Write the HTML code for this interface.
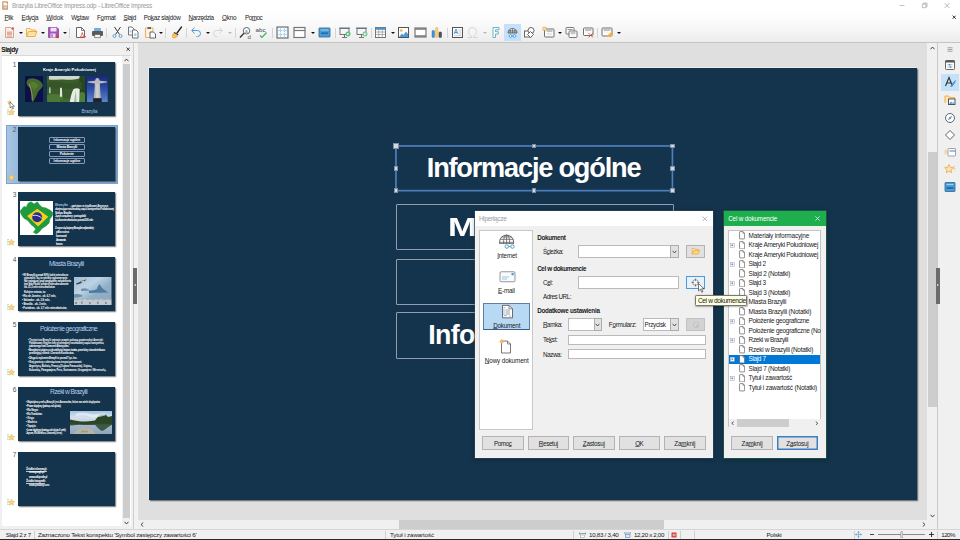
<!DOCTYPE html>
<html><head><meta charset="utf-8">
<style>
*{box-sizing:border-box;margin:0;padding:0}
html,body{width:960px;height:540px;overflow:hidden;background:#fff}
body{position:relative;font-family:"Liberation Sans",sans-serif;font-size:6.3px;color:#1a1a1a}
.a{position:absolute}
.t{position:absolute;white-space:nowrap;line-height:8px;height:8px}
u{text-decoration:underline;text-decoration-thickness:0.5px;text-underline-offset:0px;text-decoration-color:rgba(30,30,30,.6)}
#titlebar{left:0;top:0;width:960px;height:11px;background:#fff}
#menubar{left:0;top:11px;width:960px;height:32px;background:linear-gradient(#fff 0,#fbfbfb 35%,#f3f3f3 75%,#ececec 100%);border-bottom:1px solid #c4c4c4}
#toolbar{display:none}
.sep{position:absolute;top:28px;width:1px;height:10px;background:#d4d4d4}
.dd{position:absolute;top:32.2px;width:0;height:0;border-left:2px solid transparent;border-right:2px solid transparent;border-top:2.4px solid #111}
.ic{position:absolute;top:25.8px;width:13px;height:13px;overflow:visible}
#work{left:137.5px;top:43px;width:790px;height:476.5px;background:#dfdfdf}
#slide{left:149px;top:68px;width:768.2px;height:431.8px;background:#14334c;box-shadow:-1px -1px 0 #ebebeb,1px 1px 1.2px rgba(50,50,50,.75)}
.box{position:absolute;border:1px solid rgba(200,210,222,.68);border-radius:1px}
.bt{position:absolute;color:#fff;font-weight:bold;font-size:26.6px;line-height:30px;white-space:nowrap;letter-spacing:-0.35px}
.h{position:absolute;background:#d4d8dd;border:0.6px solid #8191a5}
.dlg{position:absolute;background:#f0f0f0}
.btn{position:absolute;background:#e1e1e1;border:0.6px solid #b3b3b3;height:14px;text-align:center;line-height:13px;font-size:6.3px}
.inp{position:absolute;background:#fff;border:0.6px solid #bbb}
.thumb{position:absolute;left:18.1px;width:97.3px;height:54.5px;background:#14334c;box-shadow:0.8px 0.8px 1.2px rgba(0,0,0,.55);overflow:hidden}
.num{position:absolute;left:8px;width:8.5px;text-align:right;font-size:6.6px;color:#555;line-height:8px}
.star{position:absolute;left:7px;width:8px;height:8px}
.row{position:absolute;left:728.6px;width:92px;height:9.5px}
.row .t{left:20px;top:0.9px;font-size:6.45px}
.pg{position:absolute;left:10.2px;top:0.3px;width:6.2px;height:8.5px}
.ex{position:absolute;left:2.2px;top:3px;width:4px;height:4px;border:0.5px solid #8a93a8;background:#fff}
.ex:before{content:"";position:absolute;left:0.5px;top:1.2px;width:2px;height:0.6px;background:#33477a}
.ex:after{content:"";position:absolute;left:1.2px;top:0.5px;width:0.6px;height:2px;background:#33477a}
</style></head><body>

<!-- TITLE BAR -->
<div class="a" id="titlebar"></div>
<div class="a" id="menubar"></div>
<div class="a" id="toolbar"></div>

<!-- title -->
<svg class="a" style="left:1.600px;top:1px;width:6.800px;height:9px" viewBox="0 0 14 18"><path d="M1 1h8l4 4v12H1z" fill="#c9a57e" stroke="#b88d63" stroke-width="1"/><path d="M3 3h5.500l2.500 2.500V9H3z" fill="#fbf6f0"/><rect x="4" y="11" width="6" height="4" fill="#e8d5bd"/><circle cx="11.500" cy="2.800" r="1.800" fill="#e8843a"/></svg>
<div class="t" style="letter-spacing:-0.224px;left:12px;top:1.6px;font-size:6.35px;color:#9a9a9a">Brazylia LibreOffice Impress.odp - LibreOffice Impress</div>
<svg class="a" style="left:898px;top:1px;width:58px;height:9px" viewBox="0 0 58 9"><path d="M1.5 4.5h5" stroke="#9a9a9a" stroke-width=".6" fill="none"/><path d="M24.3 3.1h3.6v3.6h-3.6zM25.4 3.1v-1h3.6v3.6h-1" stroke="#8a8a8a" stroke-width=".55" fill="none"/><path d="M46.7 2.2l4.8 4.8M51.5 2.2l-4.8 4.8" stroke="#8a8a8a" stroke-width=".6" fill="none"/></svg>
<svg class="a" style="left:951.800px;top:14.800px;width:4.400px;height:4.400px" viewBox="0 0 5 5"><path d="M.7.7l3.600 3.600M4.300.7L.7 4.300" stroke="#222" stroke-width="1.050" fill="none"/></svg>
<!-- menu -->
<div class="t" style="letter-spacing:-0.389px;left:4.4px;top:14.200px"><u>P</u>lik</div>
<div class="t" style="letter-spacing:-0.384px;left:21.6px;top:14.200px"><u>E</u>dycja</div>
<div class="t" style="letter-spacing:-0.103px;left:46.2px;top:14.200px"><u>W</u>idok</div>
<div class="t" style="letter-spacing:-0.284px;left:71.2px;top:14.200px">W<u>s</u>taw</div>
<div class="t" style="letter-spacing:-0.247px;left:97px;top:14.200px">F<u>o</u>rmat</div>
<div class="t" style="letter-spacing:-0.363px;left:123.6px;top:14.200px"><u>S</u>lajd</div>
<div class="t" style="letter-spacing:-0.267px;left:143.7px;top:14.200px">Po<u>k</u>az slajdów</div>
<div class="t" style="letter-spacing:-0.375px;left:188.6px;top:14.200px"><u>N</u>arzędzia</div>
<div class="t" style="letter-spacing:-0.191px;left:222px;top:14.200px"><u>O</u>kno</div>
<div class="t" style="letter-spacing:-0.522px;left:245px;top:14.200px">Po<u>m</u>oc</div>

<!-- toolbar separators -->
<div class="sep" style="left:69.3px"></div><div class="sep" style="left:106.3px"></div><div class="sep" style="left:165.4px"></div><div class="sep" style="left:186.2px"></div><div class="sep" style="left:234.6px"></div><div class="sep" style="left:271.6px"></div><div class="sep" style="left:334.6px"></div><div class="sep" style="left:371.4px"></div><div class="sep" style="left:446.6px"></div><div class="sep" style="left:597.4px"></div>
<!-- dropdown arrows -->
<div class="dd" style="left:18.9px"></div><div class="dd" style="left:41.1px"></div><div class="dd" style="left:63.1px"></div><div class="dd" style="left:159.2px"></div><div class="dd" style="left:205.6px"></div><div class="dd" style="left:227.6px;border-top-color:#b5b5b5"></div><div class="dd" style="left:311.1px"></div><div class="dd" style="left:390.6px"></div><div class="dd" style="left:482.6px;border-top-color:#b5b5b5"></div><div class="dd" style="left:558.2px"></div><div class="dd" style="left:617.2px"></div>
<!-- hyperlink button highlight -->
<div class="a" style="left:504px;top:24px;width:16.7px;height:17px;background:#c5e1f9"></div>

<!-- ICONS (viewBox 26x26 => 13px) -->
<svg class="ic" style="left:3px" viewBox="0 0 26 26"><path d="M5 3h11l5 5v15H5z" fill="#faeee9" stroke="#d9a48f" stroke-width="2"/><rect x="8" y="11" width="10" height="8" fill="#dfb09e"/><path d="M8 21h10" stroke="#dfb09e" stroke-width="1.6"/><circle cx="19.5" cy="5" r="2.6" fill="#e0564a"/></svg>
<svg class="ic" style="left:25px" viewBox="0 0 26 26"><path d="M3 21V5h7l2 3h9v4" fill="#fdf0cc" stroke="#eda63c" stroke-width="1.8"/><path d="M3 21l4-10h17l-4 10z" fill="#fce3a0" stroke="#eda63c" stroke-width="1.8" stroke-linejoin="round"/></svg>
<svg class="ic" style="left:47px" viewBox="0 0 26 26"><path d="M3 3h17l3 3v17H3z" fill="#a156b7" stroke="#8e44a6" stroke-width="1.6"/><rect x="7" y="3.5" width="12" height="7.5" fill="#f1e3f5"/><rect x="7" y="15" width="10" height="8" fill="#f1e3f5"/><rect x="9" y="16.5" width="2.4" height="5" fill="#8e44a6"/><circle cx="21" cy="21.5" r="3.1" fill="#e53b3b"/></svg>
<svg class="ic" style="left:74px" viewBox="0 0 26 26"><path d="M5 3h10l6 6v14H5z" fill="#fff" stroke="#666" stroke-width="2"/><path d="M15 3v6h6" fill="none" stroke="#666" stroke-width="1.6"/><path d="M11 23c3-2 5-6 5.5-10 .8 5 3.500 8 7 8.500-4-.5-8 0-12.500 1.500z" fill="none" stroke="#e04a3f" stroke-width="1.6"/></svg>
<svg class="ic" style="left:90.5px" viewBox="0 0 26 26"><rect x="7.500" y="5" width="11" height="6" fill="#6fb1de" stroke="#4b8fc2" stroke-width="1.200"/><rect x="2" y="10" width="22" height="10" rx="2" fill="#5a5a5a"/><rect x="7.500" y="17" width="11" height="6.500" fill="#f4f4f4" stroke="#5a5a5a" stroke-width="1.300"/></svg>
<svg class="ic" style="left:110.6px" viewBox="0 0 26 26"><path d="M7 2l10 15M19 2L9 17" stroke="#3a3a3a" stroke-width="2" fill="none"/><circle cx="7" cy="20" r="3" fill="#eaf4fb" stroke="#4f9bd0" stroke-width="1.8"/><circle cx="19" cy="20" r="3" fill="#eaf4fb" stroke="#4f9bd0" stroke-width="1.8"/></svg>
<svg class="ic" style="left:127.4px" viewBox="0 0 26 26"><path d="M3 2h7l4 4v12H3z" fill="#fff" stroke="#666" stroke-width="1.8"/><path d="M11 8h7l4 4v12H11z" fill="#fff" stroke="#666" stroke-width="1.8"/><rect x="14" y="15" width="5" height="5" fill="#9fd0ea"/><rect x="5" y="9" width="4" height="4" fill="#9fd0ea"/></svg>
<svg class="ic" style="left:144px" viewBox="0 0 26 26"><rect x="3" y="4" width="15" height="19" rx="1" fill="#fbf3e2" stroke="#e5b673" stroke-width="2.2"/><rect x="7" y="2" width="7" height="4" fill="#666"/><path d="M12 12h7l4 4v8H12z" fill="#fff" stroke="#555" stroke-width="1.8"/></svg>
<svg class="ic" style="left:169.5px" viewBox="0 0 26 26"><path d="M23 2L14 14" stroke="#222" stroke-width="2.6" stroke-linecap="round"/><path d="M9 12l8 5-1 2-9-5z" fill="#333"/><path d="M7 14l8 5c0 3-3 5-9 5-2-2-2-6 1-10z" fill="#f6c25b" stroke="#eba53a" stroke-width="1.4"/></svg>
<svg class="ic" style="left:189.5px" viewBox="0 0 26 26"><path d="M4 9h11a6 6 0 0 1 0 12h-2" fill="none" stroke="#4f9bd0" stroke-width="2"/><path d="M9 3L3.500 9 9 15" fill="none" stroke="#4f9bd0" stroke-width="2"/></svg>
<svg class="ic" style="left:211px" viewBox="0 0 26 26"><path d="M22 9H11a6 6 0 0 0 0 12h2" fill="none" stroke="#d0d0d0" stroke-width="1.8"/><path d="M17 3l5.500 6L17 15" fill="none" stroke="#d0d0d0" stroke-width="1.8"/></svg>
<svg class="ic" style="left:239px" viewBox="0 0 26 26"><circle cx="15" cy="9.500" r="6.500" fill="#fff" stroke="#555" stroke-width="1.8"/><path d="M10 14.500L2 23" stroke="#333" stroke-width="2.6"/><text x="12" y="13" font-size="9" font-family="Liberation Sans" fill="#4f9bd0" font-weight="bold">a</text><text x="17" y="25" font-size="12" font-family="Liberation Sans" fill="#555">d</text></svg>
<svg class="ic" style="left:254.500px" viewBox="0 0 26 26"><text x="1" y="12" font-size="12.500" font-family="Liberation Sans" fill="#444">abc</text><path d="M10 19l4 4 9-10" fill="none" stroke="#3fae6a" stroke-width="2.4"/></svg>
<svg class="ic" style="left:275.500px" viewBox="0 0 26 26"><rect x="2" y="2" width="22" height="22" fill="#f3f9fd" stroke="#555" stroke-width="2"/><path d="M9 3v20M17 3v20M3 9h20M3 17h20" stroke="#7fb7df" stroke-width="1.6" stroke-dasharray="2 1.500"/></svg>
<svg class="ic" style="left:293px" viewBox="0 0 26 26"><rect x="2" y="3" width="22" height="20" fill="#fff" stroke="#777" stroke-width="2.4"/><path d="M2 9h22" stroke="#777" stroke-width="2.400"/></svg>
<svg class="ic" style="left:318px" viewBox="0 0 26 26"><rect x="2" y="4" width="22" height="18" rx="1" fill="#4a9bd6" stroke="#3b6f98" stroke-width="1.800"/><path d="M5 8h16" stroke="#9fd0ee" stroke-width="2"/><path d="M6 14.500h14" stroke="#1f6fb3" stroke-width="3.500"/></svg>
<svg class="ic" style="left:338px" viewBox="0 0 26 26"><path d="M2 4h22" stroke="#4b7fa8" stroke-width="2"/><rect x="4" y="5" width="18" height="12" fill="#f6f6f6" stroke="#666" stroke-width="1.800"/><path d="M13 17v5M8 23h10" stroke="#666" stroke-width="1.800"/><circle cx="20" cy="16" r="4.500" fill="#6cc68a" stroke="#3fa862" stroke-width="1"/><path d="M18.500 13.500l4 2.500-4 2.500z" fill="#fff"/></svg>
<svg class="ic" style="left:354.500px" viewBox="0 0 26 26"><path d="M2 4h22" stroke="#4b7fa8" stroke-width="2"/><rect x="4" y="5" width="18" height="12" fill="#f6f6f6" stroke="#666" stroke-width="1.800"/><path d="M13 17v5M8 23h10" stroke="#666" stroke-width="1.800"/><circle cx="20" cy="16" r="4.500" fill="#8fd3a6" stroke="#5fb87d" stroke-width="1"/><path d="M18.500 13.500l4 2.500-4 2.500z" fill="#fff"/></svg>
<svg class="ic" style="left:374.300px" viewBox="0 0 26 26"><rect x="3" y="3" width="20" height="20" fill="#fff" stroke="#666" stroke-width="1.800"/><rect x="3" y="3" width="20" height="4.500" fill="#4a8fc7"/><path d="M3 12h20M3 17h20M9.500 7v16M16.500 7v16" stroke="#888" stroke-width="1.300"/></svg>
<svg class="ic" style="left:397.300px" viewBox="0 0 26 26"><rect x="3" y="3" width="20" height="20" fill="#fff" stroke="#555" stroke-width="2"/><circle cx="8.500" cy="9" r="2.600" fill="#f3b24a"/><path d="M4 22l6-7 3 3 5-7 4 5v6z" fill="#4f9bd8"/></svg>
<svg class="ic" style="left:414px" viewBox="0 0 26 26"><rect x="2" y="4" width="22" height="18" fill="#fff" stroke="#777" stroke-width="2.400"/><path d="M2 6h22M2 20h22" stroke="#777" stroke-width="3"/></svg>
<svg class="ic" style="left:430.200px" viewBox="0 0 26 26"><rect x="4" y="9" width="5" height="14" rx="1.500" fill="#3f92dc" stroke="#2f7cc2" stroke-width="1"/><rect x="11" y="3" width="5" height="20" rx="1.500" fill="#f6cd7b" stroke="#e9b04f" stroke-width="1"/><rect x="18" y="12" width="5" height="11" rx="1.500" fill="#555" stroke="#333" stroke-width="1"/></svg>
<svg class="ic" style="left:450.500px" viewBox="0 0 26 26"><rect x="3" y="3" width="20" height="20" fill="#fff" stroke="#555" stroke-width="2"/><text x="5" y="16.500" font-size="13" font-weight="bold" font-family="Liberation Sans" fill="#3f92dc">A</text><path d="M15 8h6M15 12h6M15 16h6M6 19.500h15" stroke="#aaa" stroke-width="1.300"/></svg>
<svg class="ic" style="left:466px" viewBox="0 0 26 26"><path d="M3 23h8v-2.500C7 18.500 5 15 5 11.500 5 6.500 8.500 3 13 3s8 3.500 8 8.500c0 3.500-2 7-6 9V23h8" fill="none" stroke="#cfcfcf" stroke-width="1.700"/></svg>
<svg class="ic" style="left:489.300px" viewBox="0 0 26 26"><path d="M8 3h12v4.600h-7v3.800h5.500v4.600H13V23H8z" fill="#fff" stroke="#5aa9c4" stroke-width="1.800" stroke-linejoin="round"/></svg>
<svg class="ic" style="left:506px" viewBox="0 0 26 26"><path d="M4 14a9 9 0 0 1 18 0z" fill="#f2f8fc" stroke="#4a4a4a" stroke-width="1.500"/><path d="M13 5v9M8.500 6.500v7.500M17.500 6.500v7.500M5 9.500h16M4 12h18" stroke="#4a4a4a" stroke-width="1.200"/><circle cx="9" cy="20" r="2.800" fill="#e8f4fb" stroke="#3f92dc" stroke-width="1.600"/><circle cx="17" cy="20" r="2.800" fill="#e8f4fb" stroke="#3f92dc" stroke-width="1.600"/><path d="M11.500 20h3" stroke="#3f92dc" stroke-width="1.500"/></svg>
<svg class="ic" style="left:522.500px" viewBox="0 0 26 26"><rect x="3" y="10" width="13" height="12" fill="#fff" stroke="#555" stroke-width="1.800"/><circle cx="16" cy="9" r="6" fill="#fff" stroke="#555" stroke-width="1.800"/><path d="M15 11l6 6-6 6-6-6z" fill="#fff" stroke="#555" stroke-width="1.800"/></svg>
<svg class="ic" style="left:541.500px" viewBox="0 0 26 26"><rect x="5" y="6" width="19" height="16" rx="1.500" fill="#fff" stroke="#666" stroke-width="1.900"/><path d="M9 10h12" stroke="#666" stroke-width="1.600"/><path d="M9 14.500h11M9 17.500h11" stroke="#ccc" stroke-width="1.200"/><rect x="2" y="2.500" width="6" height="6" fill="#fbe4b0" stroke="#eda63c" stroke-width="1.400"/></svg>
<svg class="ic" style="left:565.300px" viewBox="0 0 26 26"><rect x="2" y="3" width="16" height="13" rx="1.500" fill="#fff" stroke="#666" stroke-width="1.800"/><path d="M5 7h10" stroke="#666" stroke-width="1.400"/><rect x="8" y="10" width="16" height="13" rx="1.500" fill="#fff" stroke="#666" stroke-width="1.800"/><path d="M11 14h10" stroke="#666" stroke-width="1.500"/><path d="M12 18h8" stroke="#ccc" stroke-width="1.200"/></svg>
<svg class="ic" style="left:581.500px" viewBox="0 0 26 26"><rect x="3" y="4" width="19" height="15" rx="1.500" fill="#fff" stroke="#666" stroke-width="1.900"/><path d="M6 8h13" stroke="#666" stroke-width="1.600"/><path d="M7 12h8" stroke="#ddd" stroke-width="1.200"/><path d="M13 14l9 9M22 14l-9 9" stroke="#e04a4a" stroke-width="1.800"/></svg>
<svg class="ic" style="left:601.300px" viewBox="0 0 26 26"><rect x="2" y="4" width="20" height="16" rx="1.500" fill="#fff" stroke="#666" stroke-width="1.900"/><path d="M5 8h14" stroke="#666" stroke-width="1.600"/><path d="M6 12h9" stroke="#ddd" stroke-width="1.200"/><path d="M22 10v12H10z" fill="#f3b04a"/></svg>


<!-- WORKSPACE -->
<div class="a" id="work"></div>
<div class="a" id="slide"></div>
<!-- LEFT PANEL -->
<div class="a" style="left:0;top:43px;width:133.5px;height:486px;background:#f0f0f0"></div>
<div class="a" style="left:133px;top:43px;width:1px;height:486px;background:#cfcfcf"></div>
<div class="a" style="left:134px;top:43px;width:3.5px;height:486px;background:#f2f2f2"></div>
<div class="a" style="left:133.3px;top:267.5px;width:3.4px;height:36px;background:#6b6b6b"></div>
<div class="a" style="left:134.2px;top:284px;width:0;height:0;border-top:1.5px solid transparent;border-bottom:1.5px solid transparent;border-right:2px solid #eee"></div>
<div class="t" style="letter-spacing:-0.426px;left:1.3px;top:45.6px;font-weight:bold;font-size:6.5px;color:#111">Slajdy</div>
<svg class="a" style="left:125.800px;top:46.800px;width:4.400px;height:4.400px" viewBox="0 0 5 5"><path d="M.6.6l3.800 3.800M4.400.6L.6 4.400" stroke="#333" stroke-width="1.050" fill="none"/></svg>
<div class="a" style="left:1.5px;top:55.4px;width:129px;height:471px;background:#fff;border-top:0.6px solid #d9d9d9"></div>
<!-- panel scrollbar -->
<div class="a" style="left:122.3px;top:56px;width:7.7px;height:470.500px;background:#f0f0f0"></div>
<div class="a" style="left:122.800px;top:64px;width:7px;height:453.500px;background:#cdcdcd"></div>
<svg class="a" style="left:124px;top:57.500px;width:5px;height:4px" viewBox="0 0 10 8"><path d="M1 6.500l4-4.500 4 4.500" fill="none" stroke="#333" stroke-width="1.800"/></svg>
<svg class="a" style="left:124px;top:520.500px;width:5px;height:4px" viewBox="0 0 10 8"><path d="M1 1.500l4 4.500 4-4.500" fill="none" stroke="#333" stroke-width="1.800"/></svg>
<!-- selection highlight slide 2 -->
<div class="a" style="left:5.500px;top:124.700px;width:112.200px;height:59.500px;background:linear-gradient(90deg,#a9c6e3 0,#8fb4d9 14%,#8aafd5 100%);border:0.6px solid #7da3cb"></div>

<!-- stars -->
<svg class="star" style="top:107.8px" viewBox="0 0 16 16"><path d="M1.500 2.500v11M1.500 3h2M1.500 8h1.500M1.500 13h2" stroke="#7cc9a6" stroke-width="1.300" stroke-dasharray="2 1"/><path d="M9 2.500l1.900 4 4.300.5-3.200 3 .9 4.300L9 12.200l-3.900 2.100.9-4.300-3.200-3 4.300-.5z" fill="#f9d488" stroke="#eaa844" stroke-width="1"/></svg><svg class="star" style="top:173.3px" viewBox="0 0 16 16"><path d="M1.500 2.500v11M1.500 3h2M1.500 8h1.500M1.500 13h2" stroke="#7cc9a6" stroke-width="1.300" stroke-dasharray="2 1"/><path d="M9 2.500l1.900 4 4.300.5-3.200 3 .9 4.300L9 12.200l-3.900 2.100.9-4.300-3.200-3 4.300-.5z" fill="#f9d488" stroke="#eaa844" stroke-width="1"/></svg><svg class="star" style="top:238.3px" viewBox="0 0 16 16"><path d="M1.500 2.500v11M1.500 3h2M1.500 8h1.500M1.500 13h2" stroke="#7cc9a6" stroke-width="1.300" stroke-dasharray="2 1"/><path d="M9 2.500l1.900 4 4.300.5-3.200 3 .9 4.300L9 12.200l-3.900 2.100.9-4.300-3.200-3 4.300-.5z" fill="#f9d488" stroke="#eaa844" stroke-width="1"/></svg><svg class="star" style="top:303.3px" viewBox="0 0 16 16"><path d="M1.500 2.500v11M1.500 3h2M1.500 8h1.500M1.500 13h2" stroke="#7cc9a6" stroke-width="1.300" stroke-dasharray="2 1"/><path d="M9 2.500l1.900 4 4.300.5-3.200 3 .9 4.300L9 12.200l-3.900 2.100.9-4.300-3.200-3 4.300-.5z" fill="#f9d488" stroke="#eaa844" stroke-width="1"/></svg><svg class="star" style="top:368.3px" viewBox="0 0 16 16"><path d="M1.500 2.500v11M1.500 3h2M1.500 8h1.500M1.500 13h2" stroke="#7cc9a6" stroke-width="1.300" stroke-dasharray="2 1"/><path d="M9 2.500l1.900 4 4.300.5-3.200 3 .9 4.300L9 12.200l-3.900 2.100.9-4.300-3.200-3 4.300-.5z" fill="#f9d488" stroke="#eaa844" stroke-width="1"/></svg><svg class="star" style="top:433.3px" viewBox="0 0 16 16"><path d="M1.500 2.500v11M1.500 3h2M1.500 8h1.500M1.500 13h2" stroke="#7cc9a6" stroke-width="1.300" stroke-dasharray="2 1"/><path d="M9 2.500l1.900 4 4.300.5-3.200 3 .9 4.300L9 12.200l-3.900 2.100.9-4.300-3.200-3 4.300-.5z" fill="#f9d488" stroke="#eaa844" stroke-width="1"/></svg><svg class="star" style="top:498.3px" viewBox="0 0 16 16"><path d="M1.500 2.500v11M1.500 3h2M1.500 8h1.500M1.500 13h2" stroke="#7cc9a6" stroke-width="1.300" stroke-dasharray="2 1"/><path d="M9 2.500l1.900 4 4.300.5-3.200 3 .9 4.300L9 12.200l-3.900 2.100.9-4.300-3.200-3 4.300-.5z" fill="#f9d488" stroke="#eaa844" stroke-width="1"/></svg><svg class="a" style="left:6.500px;top:100px;width:9px;height:10px" viewBox="0 0 18 20"><path d="M5 1l1.200 2.600 2.800.3-2.100 1.900.6 2.800L5 7.200 2.500 8.600l.6-2.800L1 3.900l2.800-.3z" fill="#fbd27a" stroke="#eba53a" stroke-width=".8"/><path d="M6 4v12l3-2.800 2 4.800 2-.8-2-4.700h4z" fill="#fff" stroke="#222" stroke-width="1"/></svg>
<!-- thumbs -->
<div class="num" style="top:60.800px">1</div>
<div class="num" style="top:125.800px">2</div>
<div class="num" style="top:190.800px">3</div>
<div class="num" style="top:255.800px">4</div>
<div class="num" style="top:320.800px">5</div>
<div class="num" style="top:385.800px">6</div>
<div class="num" style="top:450.800px">7</div>

<!-- thumb 1 -->
<div class="thumb" style="top:61.700px">
 <div class="t" style="letter-spacing:-0.034px;left:24.800px;top:4.300px;font-size:4.200px;font-weight:bold;color:#fff">Kraje Ameryki Południowej</div>
 <svg class="a" style="left:6.900px;top:14.300px;width:18.400px;height:26px" viewBox="0 0 184 260" preserveAspectRatio="none"><defs><filter id="b1" x="-10%" y="-10%" width="120%" height="120%"><feGaussianBlur stdDeviation="4"/></filter><clipPath id="c1"><rect width="184" height="260"/></clipPath></defs><rect width="184" height="260" fill="#0b1046"/><g clip-path="url(#c1)" filter="url(#b1)"><path d="M20 48C38 20 82 18 104 30c36 6 68 32 74 62-6 34-38 46-52 76-10 30-26 54-40 82-6 12-16 8-16-6 4-44-4-94-20-124C30 100 4 84 20 48z" fill="#47692b"/><path d="M60 60c24-6 60 10 76 36-10 20-36 30-46 54-6-30-24-44-34-62-4-10-4-22 4-28z" fill="#58803a" opacity=".8"/><path d="M42 78c10 30 22 60 26 96 2 26 4 48 4 70" stroke="#b89c6c" stroke-width="9" fill="none"/></g></svg>
 <svg class="a" style="left:28.500px;top:14.300px;width:38.200px;height:26.500px" viewBox="0 0 385 265" preserveAspectRatio="none"><defs><filter id="b2" x="-10%" y="-10%" width="120%" height="120%"><feGaussianBlur stdDeviation="7"/></filter><clipPath id="c2"><rect width="385" height="265"/></clipPath></defs><rect width="385" height="265" fill="#3c5c2e"/><g clip-path="url(#c2)" filter="url(#b2)"><path d="M20 0h310v22c-50 16-110 20-160 14S60 44 20 36z" fill="#e9efe9" opacity=".85"/><path d="M330 0h55v265h-40c-10-60-30-120-15-265z" fill="#2b4423"/><path d="M0 70c60-20 120-10 180 0s120 0 170-10v70H0z" fill="#365428"/><ellipse cx="70" cy="225" rx="95" ry="45" fill="#4c7836"/><ellipse cx="190" cy="248" rx="60" ry="24" fill="#436c2f"/><ellipse cx="355" cy="215" rx="40" ry="55" fill="#4f7f35"/><path d="M132 118h18l4 90h-24z" fill="#dfe9df"/><path d="M22 112h14l2 60h-18z" fill="#cfdccf" opacity=".8"/><path d="M266 132c20-12 46-14 64 0l-6 133h-96c10-50 20-98 38-133z" fill="#e6ede6"/><path d="M290 140l10 125h-30z" fill="#7f9f7a" opacity=".6"/></g></svg>
 <svg class="a" style="left:69.400px;top:14.300px;width:20.700px;height:26.300px" viewBox="0 0 208 263" preserveAspectRatio="none"><defs><linearGradient id="g3" x1="0" y1="0" x2="0" y2="1"><stop offset="0" stop-color="#1a2878"/><stop offset=".5" stop-color="#2f4fa8"/><stop offset="1" stop-color="#5f86cc"/></linearGradient><filter id="b3" x="-10%" y="-10%" width="120%" height="120%"><feGaussianBlur stdDeviation="3"/></filter><clipPath id="c3"><rect width="208" height="263"/></clipPath></defs><rect width="208" height="263" fill="url(#g3)"/><g clip-path="url(#c3)" filter="url(#b3)"><path d="M8 54l72-6 8-20c6-10 26-10 32 0l8 20 72 6v12l-70 8v22l8 130H70l8-130V74L8 66z" fill="#b9bcbd"/><path d="M96 80h16l4 140H92z" fill="#cfd1d0"/><rect x="62" y="222" width="86" height="41" fill="#202226"/></g></svg>
 <div class="t" style="letter-spacing:-0.133px;left:63.300px;top:46.100px;font-size:4.800px;color:#a9c0dc">Brazylia</div>
</div>
<!-- thumb 2 -->
<div class="thumb" style="top:126.900px">
 <div class="a" style="left:31.200px;top:9.800px;width:36px;height:6.200px;border:0.5px solid #8399bb;border-radius:1px"></div>
 <div class="a" style="left:31.200px;top:17.100px;width:36px;height:6.200px;border:0.5px solid #8399bb;border-radius:1px"></div>
 <div class="a" style="left:31.200px;top:24px;width:36px;height:6.200px;border:0.5px solid #8399bb;border-radius:1px"></div>
 <div class="a" style="left:31.200px;top:30.800px;width:36px;height:6.200px;border:0.5px solid #8399bb;border-radius:1px"></div>
 <div class="t" style="letter-spacing:-0.153px;left:35.500px;top:8.700px;font-size:3.400px;font-weight:bold;color:#fff">Informacje ogólne</div>
 <div class="t" style="letter-spacing:-0.204px;left:38.500px;top:16px;font-size:3.400px;font-weight:bold;color:#fff">Miasta Brazylii</div>
 <div class="t" style="letter-spacing:-0.203px;left:41.700px;top:22.900px;font-size:3.400px;font-weight:bold;color:#fff">Położenie</div>
 <div class="t" style="letter-spacing:-0.153px;left:35.500px;top:29.700px;font-size:3.400px;font-weight:bold;color:#fff">Informacje ogólne</div>
</div>
<!-- thumb 3 -->
<div class="thumb" style="top:191.700px">
 <div class="a" style="left:1.500px;top:9.300px;width:33px;height:33.700px;background:#fff"></div>
 <svg class="a" style="left:1.500px;top:9.300px;width:33px;height:33.700px" viewBox="0 0 330 337"><path d="M0 102L39 55l24 8 16-39 31-16 31 23 32-23 23 31 24 24 39 7 47 24 24 24-8 31-24 31-7 39-32 32-39 23-24 32-31 23-31-16 23-31-16-23-31-24-31-39-40-24-23-31z" fill="#1f9a3d" stroke="#1f9a3d" stroke-width="6" stroke-linejoin="round"/><path d="M71 149l102-71 110 79-102 97z" fill="#f4cf1b"/><circle cx="172" cy="162" r="50" fill="#2b2d8c"/><path d="M126 146c36-10 74 4 96 30" stroke="#fff" stroke-width="8" fill="none"/></svg>
 <div class="t" style="letter-spacing:-0.486px;left:36.800px;top:9.200px;font-size:4.300px;font-weight:bold;color:#8fb0d8">Brazylia</div>
 <div class="t" style="letter-spacing:-0.176px;left:52px;top:9.900px;font-size:2.800px;font-weight:bold;color:#fff">- państwo w środkowej Ameryce</div>
 <div class="t" style="letter-spacing:-0.268px;left:36.800px;top:13.300px;font-size:2.800px;font-weight:bold;color:#fff">obejmujące wschodnią część kontynentu Południowej</div>
 <div class="t" style="letter-spacing:-0.265px;left:36.800px;top:16.900px;font-size:2.800px;font-weight:bold;color:#fff">Stolica: Brasilia</div>
 <div class="t" style="letter-spacing:-0.263px;left:36.800px;top:20.400px;font-size:2.800px;font-weight:bold;color:#fff">Język urzędowy: portugalski</div>
 <div class="t" style="letter-spacing:-0.328px;left:36.800px;top:24.200px;font-size:2.800px;font-weight:bold;color:#fff">Liczba mieszkańców: ponad 200 mln</div>
 <div class="t" style="letter-spacing:-0.335px;left:36.800px;top:32.200px;font-size:2.800px;font-weight:bold;color:#fff">Z czym się kojarzy Brazylia najbardziej:</div>
 <div class="t" style="letter-spacing:-0.203px;left:37.800px;top:36.300px;font-size:2.800px;font-weight:bold;color:#fff">piłka nożna</div>
 <div class="t" style="letter-spacing:-0.186px;left:37.800px;top:40.300px;font-size:2.800px;font-weight:bold;color:#fff">karnawał</div>
 <div class="t" style="letter-spacing:-0.465px;left:37.800px;top:44.200px;font-size:2.800px;font-weight:bold;color:#fff">Amazonia</div>
 <div class="t" style="letter-spacing:-0.086px;left:37.800px;top:48.200px;font-size:2.800px;font-weight:bold;color:#fff">kawa</div>
</div>
<!-- thumb 4 -->
<div class="thumb" style="top:256.700px">
 <div class="t" style="letter-spacing:-0.574px;left:31px;top:3.500px;font-size:6.700px;color:#b4cdea">Miasta Brazylii</div>
 <div class="t" style="letter-spacing:-0.169px;left:3.800px;top:14.500px;font-size:2.800px;font-weight:bold;color:#fff">• W Brazylii ponad 80% ludzi mieszka w</div>
 <div class="t" style="letter-spacing:-0.121px;left:5.800px;top:17.600px;font-size:2.800px;font-weight:bold;color:#fff">miastach. Są to wielkie aglomeracje.</div>
 <div class="t" style="letter-spacing:-0.170px;left:5.800px;top:20.700px;font-size:2.800px;font-weight:bold;color:#fff">Niż najwięcej pod względem zaludnienia</div>
 <div class="t" style="letter-spacing:-0.244px;left:5.800px;top:23.700px;font-size:2.800px;font-weight:bold;color:#fff">jest Sao Paulo, w której mieszka obecnie</div>
 <div class="t" style="letter-spacing:-0.180px;left:5.800px;top:26.800px;font-size:2.800px;font-weight:bold;color:#fff">ok. 21,3 mln mieszkańców.</div>
 <div class="t" style="letter-spacing:-0.151px;left:5.800px;top:31.500px;font-size:2.800px;font-weight:bold;color:#fff">Kolejne miasta, to:</div>
 <div class="t" style="letter-spacing:-0.153px;left:3.800px;top:35.300px;font-size:2.800px;font-weight:bold;color:#fff">• Rio de Janeiro - ok. 6,7 mln,</div>
 <div class="t" style="letter-spacing:-0.132px;left:3.800px;top:39.300px;font-size:2.800px;font-weight:bold;color:#fff">• Salvador - ok. 2,9 mln,</div>
 <div class="t" style="letter-spacing:-0.120px;left:3.800px;top:43.300px;font-size:2.800px;font-weight:bold;color:#fff">• Brasilia - ok. 3 mln,</div>
 <div class="t" style="letter-spacing:-0.144px;left:3.800px;top:47.300px;font-size:2.800px;font-weight:bold;color:#fff">• Fortaleza - ok. 2,7 mln mieszkańców,</div>
 <svg class="a" style="left:56.400px;top:20.200px;width:37.500px;height:27.900px" viewBox="0 0 375 279"><defs><linearGradient id="g4" x1="0" y1="0" x2="1" y2="1"><stop offset="0" stop-color="#9dbdd9"/><stop offset=".35" stop-color="#bcd3e4"/><stop offset=".6" stop-color="#8fb0c9"/><stop offset="1" stop-color="#90a6b9"/></linearGradient><filter id="b4" x="-10%" y="-10%" width="120%" height="120%"><feGaussianBlur stdDeviation="5"/></filter><clipPath id="c4"><rect width="375" height="279"/></clipPath></defs><rect width="375" height="279" fill="url(#g4)"/><g clip-path="url(#c4)" filter="url(#b4)"><path d="M150 140c30-8 60-6 80-20 10-30 20-52 30-42 12 26 30 44 60 62 12 8 20 12 30 14l-200 6z" fill="#4f7a9f"/><path d="M70 120c20-12 50-10 70 2 10 8 30 12 50 14l-120 4z" fill="#6d93b2"/><path d="M0 175c40-10 70 0 90 16-30 14-60 20-90 16z" fill="#6f8ea6"/><path d="M0 215h375v64H0z" fill="#a3adb9"/><path d="M0 232l18-10 16 12 24-14 28 10 22-12 30 14 24-10 30 12 26-12 28 10 26-12 30 14 24-10 49 8v58H0z" fill="#c3c9d0"/><path d="M10 250h20v20H10zM70 244h16v24H70zM150 250h18v22h-18zM230 246h16v24h-16zM310 250h18v20h-18z" fill="#6a7482" opacity=".7"/></g><path d="M22 62c26-4 44-22 62-30 10 4 24 2 40-14-4 18-20 30-40 32-14 14-34 24-62 24z" fill="#4d4332" filter="url(#b4)"/><path d="M70 42c10-6 22-6 34-2-8 8-20 10-34 8z" fill="#e4e2d8"/></svg>
</div>
<!-- thumb 5 -->
<div class="thumb" style="top:321.700px">
 <div class="t" style="letter-spacing:-0.551px;left:21.800px;top:3.700px;font-size:6.700px;color:#b4cdea">Położenie geograficzne</div>
 <div class="t" style="letter-spacing:-0.085px;left:9.800px;top:15.400px;font-size:2.600px;font-weight:bold;color:#fff">• Terytorium Brazylii zajmuje prawie połowę powierzchni Ameryki</div>
 <div class="t" style="letter-spacing:-0.182px;left:10.800px;top:18.600px;font-size:2.600px;font-weight:bold;color:#fff">Południowej. Kraj ten leży w centralnej i wschodniej części kontynentu,</div>
 <div class="t" style="letter-spacing:-0.238px;left:10.800px;top:21.700px;font-size:2.600px;font-weight:bold;color:#fff">położonego nad Oceanem Atlantyckim.</div>
 <div class="t" style="letter-spacing:-0.281px;left:9.800px;top:25.600px;font-size:2.600px;font-weight:bold;color:#fff">• Brazylia jest piątym co do wielkości krajem świata, przez który równoleżnikowo</div>
 <div class="t" style="letter-spacing:-0.161px;left:10.800px;top:28.700px;font-size:2.600px;font-weight:bold;color:#fff">przebiegają równik i Zwrotnik Koziorożca.</div>
 <div class="t" style="letter-spacing:-0.197px;left:9.800px;top:32.900px;font-size:2.600px;font-weight:bold;color:#fff">• Długość wybrzeża Brazylii to ponad 7 tys. km.</div>
 <div class="t" style="letter-spacing:-0.143px;left:9.800px;top:36.900px;font-size:2.600px;font-weight:bold;color:#fff">• Kraj graniczy z dziesięcioma innymi państwami:</div>
 <div class="t" style="letter-spacing:-0.126px;left:10.800px;top:41.100px;font-size:2.600px;font-weight:bold;color:#fff">Argentyną, Boliwią, Francją (Gujana Francuska), Gujaną,</div>
 <div class="t" style="letter-spacing:-0.096px;left:10.800px;top:45.400px;font-size:2.600px;font-weight:bold;color:#fff">Kolumbią, Paragwajem, Peru, Surinamem, Urugwajem i Wenezuelą.</div>
</div>
<!-- thumb 6 -->
<div class="thumb" style="top:386.700px">
 <div class="t" style="letter-spacing:-0.614px;left:32px;top:1.700px;font-size:6.700px;color:#b4cdea">Rzeki w Brazylii</div>
 <div class="t" style="letter-spacing:-0.154px;left:7.800px;top:12.600px;font-size:2.600px;font-weight:bold;color:#fff">• Największą rzeką Brazylii jest Amazonka, która ma wiele dopływów</div>
 <div class="t" style="letter-spacing:-0.270px;left:7.800px;top:16.500px;font-size:2.600px;font-weight:bold;color:#fff">• Prawe dopływy (patrząc od ujścia):</div>
 <div class="t" style="letter-spacing:-0.185px;left:7.800px;top:20.400px;font-size:2.600px;font-weight:bold;color:#fff">• Rio Negro</div>
 <div class="t" style="letter-spacing:-0.244px;left:7.800px;top:24.300px;font-size:2.600px;font-weight:bold;color:#fff">• Rio Trombetas</div>
 <div class="t" style="letter-spacing:-0.121px;left:7.800px;top:28.200px;font-size:2.600px;font-weight:bold;color:#fff">• Xingu</div>
 <div class="t" style="letter-spacing:-0.049px;left:7.800px;top:32.100px;font-size:2.600px;font-weight:bold;color:#fff">• Madeira</div>
 <div class="t" style="letter-spacing:-0.139px;left:7.800px;top:36px;font-size:2.600px;font-weight:bold;color:#fff">• Tapajós</div>
 <div class="t" style="letter-spacing:-0.288px;left:7.800px;top:39.900px;font-size:2.600px;font-weight:bold;color:#fff">• Lewe dopływy (patrząc od ujścia, 6 rzek):</div>
 <div class="t" style="letter-spacing:-0.228px;left:7.800px;top:43.800px;font-size:2.600px;font-weight:bold;color:#fff">Japura, Rio Branco, Uatuma (i inne)</div>
 <svg class="a" style="left:52px;top:24.400px;width:42px;height:23.400px" viewBox="0 0 420 234"><defs><linearGradient id="g6" x1="0" y1="0" x2="0" y2="1"><stop offset="0" stop-color="#9fc3e8"/><stop offset=".25" stop-color="#d5e0ea"/><stop offset=".45" stop-color="#c5d3df"/><stop offset=".55" stop-color="#a9bccd"/><stop offset="1" stop-color="#8fa3ba"/></linearGradient><filter id="b6" x="-10%" y="-10%" width="120%" height="120%"><feGaussianBlur stdDeviation="7"/></filter><clipPath id="c6"><rect width="420" height="234"/></clipPath></defs><rect width="420" height="234" fill="url(#g6)"/><g clip-path="url(#c6)" filter="url(#b6)"><path d="M0 84c30 6 60 16 110 20 50 2 90-4 140-10 20-30 40-54 70-60 30-4 50 12 60 26l40-10v84H0z" fill="#2c4425"/><path d="M0 128h420v10c-40 24-70 52-100 62-30-14-50-40-70-62-50 4-110 2-160-4-40 6-60 10-90 10z" fill="#34503a" opacity=".9"/><path d="M20 234l70-60c40-10 90-8 120 4l50 56z" fill="#b7b4a2"/><path d="M110 196h70v18h-70z" fill="#8f8a72" opacity=".6"/><path d="M60 40c40-14 100-10 150 4s100 0 140-12" stroke="#eef2f5" stroke-width="26" fill="none" opacity=".7"/></g></svg>
</div>
<!-- thumb 7 -->
<div class="thumb" style="top:451.700px">
 <div class="t" style="letter-spacing:-0.241px;left:7.800px;top:13.500px;font-size:3px;font-weight:bold;color:#fff">Źródła informacji:</div>
 <div class="a" style="left:7.800px;top:19px;width:21px;height:.5px;background:rgba(255,255,255,.7)"></div>
 <div class="t" style="letter-spacing:-0.298px;left:11px;top:17.800px;font-size:2.700px;font-weight:bold;color:#fff">www.google.pl</div>
 <div class="t" style="letter-spacing:-0.260px;left:11px;top:21.900px;font-size:2.700px;font-weight:bold;color:#fff">www.wikipedia.pl</div>
 <div class="t" style="letter-spacing:-0.250px;left:7.800px;top:25.500px;font-size:3px;font-weight:bold;color:#fff">Źródła fotografii:</div>
 <div class="a" style="left:7.800px;top:31.300px;width:19.500px;height:.5px;background:rgba(255,255,255,.7)"></div>
 <div class="t" style="letter-spacing:-0.200px;left:11px;top:30.300px;font-size:2.700px;font-weight:bold;color:#fff">www.pixabay.com</div>
</div>

<!-- MAIN SLIDE CONTENT -->
<div class="box" style="left:396px;top:204px;width:277.500px;height:46px"></div>
<div class="box" style="left:396px;top:259px;width:277.500px;height:46px"></div>
<div class="box" style="left:396px;top:312px;width:277.500px;height:47px"></div>
<svg class="a" style="left:393px;top:143px;width:283px;height:51px" viewBox="0 0 283 51"><rect x="2.950" y="2.950" width="276.500" height="44.700" fill="none" stroke="#4e7ebb" stroke-width="1.700"/></svg>
<div class="bt" style="letter-spacing:-1.215px;left:426.800px;top:152.700px;font-size:27.200px">Informacje ogólne</div>
<div class="bt" style="left:448px;top:211.800px;transform:scaleX(1.29);transform-origin:0 0">M</div>
<div class="bt" style="letter-spacing:-0.652px;left:428.200px;top:320.300px;font-size:26.800px">Info</div>
<div class="h" style="left:393.25px;top:143.25px;width:5.4px;height:5.4px"></div><div class="h" style="left:531.90px;top:143.65px;width:4.6px;height:4.6px"></div><div class="h" style="left:670.15px;top:143.65px;width:4.6px;height:4.6px"></div><div class="h" style="left:393.65px;top:166.00px;width:4.6px;height:4.6px"></div><div class="h" style="left:670.15px;top:166.00px;width:4.6px;height:4.6px"></div><div class="h" style="left:393.65px;top:188.35px;width:4.6px;height:4.6px"></div><div class="h" style="left:531.90px;top:188.35px;width:4.6px;height:4.6px"></div><div class="h" style="left:670.15px;top:188.35px;width:4.6px;height:4.6px"></div>

<!-- HYPERLINK DIALOG -->
<div class="dlg" style="left:475px;top:211px;width:238px;height:246.500px;box-shadow:0 0 0 .5px rgba(90,110,130,.55),0 1px 5px rgba(0,0,0,.35)"></div>
<div class="a" style="left:475px;top:211px;width:238px;height:15.300px;background:#fff"></div>
<div class="t" style="letter-spacing:-0.322px;left:479px;top:214.500px;font-size:6.500px;color:#9a9a9a">Hiperłącze</div>
<svg class="a" style="left:702.300px;top:215.800px;width:5.600px;height:5.600px" viewBox="0 0 6 6"><path d="M.5.500l5 5M5.500.500l-5 5" stroke="#8a8a8a" stroke-width=".65" fill="none"/></svg>
<div class="inp" style="left:479px;top:230.200px;width:54.300px;height:200.300px;border-color:#c8c8c8"></div>
<div class="a" style="left:483.400px;top:303.200px;width:46.700px;height:26.400px;background:#b8d9f4;border:0.500px solid #5d7fa3;border-bottom:0.800px solid #3a5f8a"></div>
<!-- list icons -->
<svg class="a" style="left:496.500px;top:232.300px;width:20px;height:20px" viewBox="0 0 30 30"><defs><clipPath id="gl"><rect x="0" y="0" width="30" height="17.800"/></clipPath></defs><g clip-path="url(#gl)"><circle cx="14.400" cy="15.200" r="10.600" fill="#fff" stroke="#555" stroke-width="1.300"/><ellipse cx="14.400" cy="15.200" rx="4.600" ry="10.600" fill="none" stroke="#555" stroke-width="1.100"/><path d="M14.400 4.500v13M4.500 11h20M3.800 15.500h21.500M6.500 7.500h16" stroke="#555" stroke-width="1.100"/></g><path d="M3.800 17.300h21.200" stroke="#555" stroke-width="1.100"/><circle cx="14.600" cy="21.800" r="2.600" fill="#fff" stroke="#4fa0c8" stroke-width="1.500"/><circle cx="23.200" cy="21.800" r="2.600" fill="#fff" stroke="#4fa0c8" stroke-width="1.500"/><path d="M17.200 21.800h3.400" stroke="#4fa0c8" stroke-width="1.400"/></svg>
<svg class="a" style="left:498.900px;top:269.500px;width:17px;height:14px" viewBox="0 0 34 28"><rect x="2" y="3.500" width="30" height="20" rx="2.500" fill="#f8fafc" stroke="#6a6a6a" stroke-width="1.400"/><rect x="25" y="6" width="4.500" height="4.500" fill="#4f9bd8"/><path d="M6 14h14M6 18h10" stroke="#6fb1de" stroke-width="1.400"/></svg>
<svg class="a" style="left:500.600px;top:304px;width:13px;height:15.200px" viewBox="0 0 26 30"><path d="M3 2.500h13l7 7v18H3z" fill="#fff" stroke="#555" stroke-width="1.700" stroke-linejoin="round"/><path d="M16 2.500v7h7" fill="none" stroke="#555" stroke-width="1.300"/><rect x="9" y="10" width="9" height="12" fill="#cfcfcf"/><path d="M6 9v14h6" fill="none" stroke="#4f9bd8" stroke-width="1.200"/><path d="M5 7h4M16 24h4" stroke="#e06a6a" stroke-width="1.200"/></svg>
<svg class="a" style="left:499.300px;top:338.500px;width:14px;height:15px" viewBox="0 0 28 30"><path d="M5 4h12l6 6v18H5z" fill="#fff" stroke="#555" stroke-width="1.600"/><path d="M17 4v6h6" fill="none" stroke="#555" stroke-width="1.300"/><circle cx="5.500" cy="5" r="3" fill="#fbe4b0" stroke="#eda63c" stroke-width="1.500"/><path d="M5.500 0v10M0.500 5h10" stroke="#eda63c" stroke-width=".9"/></svg>
<div class="t" style="letter-spacing:-0.232px;left:497.300px;top:251.500px;font-size:6.300px"><u>I</u>nternet</div>
<div class="t" style="letter-spacing:-0.193px;left:498.100px;top:286.500px;font-size:6.300px"><u>E</u>-mail</div>
<div class="t" style="letter-spacing:-0.215px;left:493.200px;top:321.600px;font-size:6.300px"><u>D</u>okument</div>
<div class="t" style="letter-spacing:-0.106px;left:484.800px;top:356.600px;font-size:6.300px"><u>N</u>owy dokument</div>
<!-- right side -->
<div class="t" style="letter-spacing:-0.287px;left:537.200px;top:233.900px;font-weight:bold;font-size:6.300px">Dokument</div>
<div class="t" style="letter-spacing:-0.477px;left:543px;top:248px;font-size:6.300px">Ś<u>c</u>ieżka:</div>
<div class="inp" style="left:578px;top:244.600px;width:101px;height:13.800px"></div>
<div class="a" style="left:670.400px;top:245.200px;width:8.200px;height:12.600px;background:#e1e1e1;border:0.500px solid #adadad"></div>
<svg class="a" style="left:672px;top:249.800px;width:5px;height:3.800px" viewBox="0 0 9 7"><path d="M1 1.500l3.500 4 3.500-4" fill="none" stroke="#333" stroke-width="1.500"/></svg>
<div class="btn" style="left:686px;top:244.600px;width:19.200px;height:13.800px"></div>
<svg class="a" style="left:690.800px;top:247.300px;width:9.500px;height:8.500px" viewBox="0 0 26 24"><path d="M3 20V4h7l2 3h9v4" fill="#fbe9b9" stroke="#eda63c" stroke-width="2"/><path d="M3 20l4-10h17l-4 10z" fill="#fad978" stroke="#eda63c" stroke-width="2" stroke-linejoin="round"/></svg>
<div class="t" style="letter-spacing:-0.372px;left:537.200px;top:264.800px;font-weight:bold;font-size:6.300px">Cel w dokumencie</div>
<div class="t" style="letter-spacing:-0.434px;left:543px;top:278.800px;font-size:6.300px">C<u>e</u>l:</div>
<div class="inp" style="left:578px;top:275.700px;width:101px;height:13.600px"></div>
<div class="btn" style="left:686px;top:275.700px;width:19.200px;height:13.600px;background:#e5f1fb;border:0.800px solid #4a9ade"></div>
<svg class="a" style="left:690.800px;top:278px;width:9px;height:9px" viewBox="0 0 17 17"><circle cx="8.500" cy="8.500" r="5.300" fill="#fff" stroke="#555" stroke-width="1.100"/><path d="M8.500 1v5M8.500 11v5M1 8.500h5M11 8.500h5" stroke="#444" stroke-width="1.100"/></svg>
<div class="t" style="letter-spacing:-0.455px;left:543px;top:292.800px;font-size:6.300px">Adres URL:</div>
<div class="t" style="letter-spacing:-0.252px;left:537.200px;top:307px;font-weight:bold;font-size:6.300px">Dodatkowe ustawienia</div>
<div class="t" style="letter-spacing:-0.453px;left:543px;top:320.800px;font-size:6.300px"><u>R</u>amka:</div>
<div class="inp" style="left:568.400px;top:317.800px;width:34px;height:13.600px"></div>
<div class="a" style="left:593.800px;top:318.400px;width:8.200px;height:12.400px;background:#e1e1e1;border:0.500px solid #adadad"></div>
<svg class="a" style="left:595.400px;top:322.800px;width:5px;height:3.800px" viewBox="0 0 9 7"><path d="M1 1.500l3.500 4 3.500-4" fill="none" stroke="#333" stroke-width="1.500"/></svg>
<div class="t" style="letter-spacing:-0.263px;left:608.800px;top:320.800px;font-size:6.300px">F<u>o</u>rmularz:</div>
<div class="inp" style="left:643.200px;top:317.800px;width:35.800px;height:13.600px"></div>
<div class="t" style="letter-spacing:-0.307px;left:644.600px;top:320.800px;font-size:6.300px">Przycisk</div>
<div class="a" style="left:670.400px;top:318.400px;width:8.200px;height:12.400px;background:#e1e1e1;border:0.500px solid #adadad"></div>
<svg class="a" style="left:672px;top:322.800px;width:5px;height:3.800px" viewBox="0 0 9 7"><path d="M1 1.500l3.500 4 3.500-4" fill="none" stroke="#333" stroke-width="1.500"/></svg>
<div class="btn" style="left:686px;top:317.800px;width:19.200px;height:13.600px;background:#d2d2d2;border-color:#c2c2c2"></div>
<svg class="a" style="left:691.500px;top:320.800px;width:8px;height:8px" viewBox="0 0 16 16"><circle cx="8" cy="8" r="5.500" fill="none" stroke="#bdbdbd" stroke-width="1.400"/><rect x="8" y="8" width="5" height="5" fill="#c4c4c4"/></svg>
<div class="t" style="letter-spacing:-0.328px;left:543px;top:336.400px;font-size:6.300px">Te<u>k</u>st:</div>
<div class="inp" style="left:568.400px;top:334.600px;width:137.300px;height:10.600px"></div>
<div class="t" style="letter-spacing:-0.422px;left:543px;top:350.500px;font-size:6.300px">N<u>a</u>zwa:</div>
<div class="inp" style="left:568.400px;top:348.800px;width:137.300px;height:10.600px"></div>
<!-- buttons -->
<div class="btn" style="left:482px;top:436.400px;width:41.500px"><span style="letter-spacing:-0.422px;">Pomo<u>c</u></span></div>
<div class="btn" style="left:527.500px;top:436.400px;width:41.500px"><span style="letter-spacing:-0.339px;"><u>R</u>esetuj</span></div>
<div class="btn" style="left:573px;top:436.400px;width:41.500px"><span style="letter-spacing:-0.227px;"><u>Z</u>astosuj</span></div>
<div class="btn" style="left:618.500px;top:436.400px;width:41.500px"><span style="letter-spacing:-0.555px;"><u>O</u>K</span></div>
<div class="btn" style="left:664px;top:436.400px;width:41.500px"><span style="letter-spacing:-0.152px;">Za<u>m</u>knij</span></div>

<!-- TARGET DIALOG -->
<div class="dlg" style="left:723.600px;top:211px;width:102px;height:246.700px;box-shadow:0 0 0 .35px #2b9d57,0 1px 5px rgba(0,0,0,.35)"></div>
<div class="a" style="left:723.600px;top:211px;width:102px;height:15.100px;background:#1fae4e"></div>
<div class="t" style="letter-spacing:-0.153px;left:728.200px;top:214.500px;font-size:6.300px;color:#fff">Cel w dokumencie</div>
<svg class="a" style="left:815px;top:216px;width:5px;height:5px" viewBox="0 0 6 6"><path d="M.5.500l5 5M5.500.500l-5 5" stroke="#fff" stroke-width=".8" fill="none"/></svg>
<div class="inp" style="left:728px;top:230.200px;width:93.200px;height:197px;border-color:#c4c4c4"></div>
<div class="a" style="left:728.500px;top:354.800px;width:91.800px;height:9px;background:#0078d7"></div>
<!-- rows -->
<div class="row" style="top:231px"><svg class="pg" viewBox="0 0 11 15"><path d="M2 1h5l3 3v9a1 1 0 0 1-1 1H2a1 1 0 0 1-1-1V2a1 1 0 0 1 1-1z" fill="#fff" stroke="#555" stroke-width="1.200"/><path d="M7 1v3h3" fill="none" stroke="#555" stroke-width="1"/></svg><div class="t" style="letter-spacing:-0.178px;">Materiały informacyjne</div></div>
<div class="row" style="top:240.500px"><svg class="a" style="left:1.900px;top:2.500px;width:4.600px;height:4.600px" viewBox="0 0 9 9"><rect x=".5" y=".5" width="8" height="8" fill="#fff" stroke="#9aa3b5" stroke-width="1"/><path d="M2.500 4.500h4M4.500 2.500v4" stroke="#3a4c80" stroke-width="1"/></svg><svg class="pg" viewBox="0 0 11 15"><path d="M2 1h5l3 3v9a1 1 0 0 1-1 1H2a1 1 0 0 1-1-1V2a1 1 0 0 1 1-1z" fill="#fff" stroke="#555" stroke-width="1.200"/><path d="M7 1v3h3" fill="none" stroke="#555" stroke-width="1"/></svg><div class="t" style="letter-spacing:-0.269px;">Kraje Ameryki Południowej</div></div>
<div class="row" style="top:250px"><svg class="pg" viewBox="0 0 11 15"><path d="M2 1h5l3 3v9a1 1 0 0 1-1 1H2a1 1 0 0 1-1-1V2a1 1 0 0 1 1-1z" fill="#fff" stroke="#555" stroke-width="1.200"/><path d="M7 1v3h3" fill="none" stroke="#555" stroke-width="1"/></svg><div class="t" style="letter-spacing:-0.269px;">Kraje Ameryki Południowej</div></div>
<div class="row" style="top:259.500px"><svg class="a" style="left:1.900px;top:2.500px;width:4.600px;height:4.600px" viewBox="0 0 9 9"><rect x=".5" y=".5" width="8" height="8" fill="#fff" stroke="#9aa3b5" stroke-width="1"/><path d="M2.500 4.500h4M4.500 2.500v4" stroke="#3a4c80" stroke-width="1"/></svg><svg class="pg" viewBox="0 0 11 15"><path d="M2 1h5l3 3v9a1 1 0 0 1-1 1H2a1 1 0 0 1-1-1V2a1 1 0 0 1 1-1z" fill="#fff" stroke="#555" stroke-width="1.200"/><path d="M7 1v3h3" fill="none" stroke="#555" stroke-width="1"/></svg><div class="t" style="letter-spacing:-0.384px;">Slajd 2</div></div>
<div class="row" style="top:269px"><svg class="pg" viewBox="0 0 11 15"><path d="M2 1h5l3 3v9a1 1 0 0 1-1 1H2a1 1 0 0 1-1-1V2a1 1 0 0 1 1-1z" fill="#fff" stroke="#555" stroke-width="1.200"/><path d="M7 1v3h3" fill="none" stroke="#555" stroke-width="1"/></svg><div class="t" style="letter-spacing:-0.253px;">Slajd 2 (Notatki)</div></div>
<div class="row" style="top:278.500px"><svg class="a" style="left:1.900px;top:2.500px;width:4.600px;height:4.600px" viewBox="0 0 9 9"><rect x=".5" y=".5" width="8" height="8" fill="#fff" stroke="#9aa3b5" stroke-width="1"/><path d="M2.500 4.500h4M4.500 2.500v4" stroke="#3a4c80" stroke-width="1"/></svg><svg class="pg" viewBox="0 0 11 15"><path d="M2 1h5l3 3v9a1 1 0 0 1-1 1H2a1 1 0 0 1-1-1V2a1 1 0 0 1 1-1z" fill="#fff" stroke="#555" stroke-width="1.200"/><path d="M7 1v3h3" fill="none" stroke="#555" stroke-width="1"/></svg><div class="t" style="letter-spacing:-0.384px;">Slajd 3</div></div>
<div class="row" style="top:288px"><svg class="pg" viewBox="0 0 11 15"><path d="M2 1h5l3 3v9a1 1 0 0 1-1 1H2a1 1 0 0 1-1-1V2a1 1 0 0 1 1-1z" fill="#fff" stroke="#555" stroke-width="1.200"/><path d="M7 1v3h3" fill="none" stroke="#555" stroke-width="1"/></svg><div class="t" style="letter-spacing:-0.253px;">Slajd 3 (Notatki)</div></div>
<div class="row" style="top:297.500px"><svg class="pg" viewBox="0 0 11 15"><path d="M2 1h5l3 3v9a1 1 0 0 1-1 1H2a1 1 0 0 1-1-1V2a1 1 0 0 1 1-1z" fill="#fff" stroke="#555" stroke-width="1.200"/><path d="M7 1v3h3" fill="none" stroke="#555" stroke-width="1"/></svg><div class="t" style="letter-spacing:-0.267px;">Miasta Brazylii</div></div>
<div class="row" style="top:307px"><svg class="pg" viewBox="0 0 11 15"><path d="M2 1h5l3 3v9a1 1 0 0 1-1 1H2a1 1 0 0 1-1-1V2a1 1 0 0 1 1-1z" fill="#fff" stroke="#555" stroke-width="1.200"/><path d="M7 1v3h3" fill="none" stroke="#555" stroke-width="1"/></svg><div class="t" style="letter-spacing:-0.204px;">Miasta Brazylii (Notatki)</div></div>
<div class="row" style="top:316.500px"><svg class="a" style="left:1.900px;top:2.500px;width:4.600px;height:4.600px" viewBox="0 0 9 9"><rect x=".5" y=".5" width="8" height="8" fill="#fff" stroke="#9aa3b5" stroke-width="1"/><path d="M2.500 4.500h4M4.500 2.500v4" stroke="#3a4c80" stroke-width="1"/></svg><svg class="pg" viewBox="0 0 11 15"><path d="M2 1h5l3 3v9a1 1 0 0 1-1 1H2a1 1 0 0 1-1-1V2a1 1 0 0 1 1-1z" fill="#fff" stroke="#555" stroke-width="1.200"/><path d="M7 1v3h3" fill="none" stroke="#555" stroke-width="1"/></svg><div class="t" style="letter-spacing:-0.293px;">Położenie geograficzne</div></div>
<div class="row" style="top:326px"><svg class="pg" viewBox="0 0 11 15"><path d="M2 1h5l3 3v9a1 1 0 0 1-1 1H2a1 1 0 0 1-1-1V2a1 1 0 0 1 1-1z" fill="#fff" stroke="#555" stroke-width="1.200"/><path d="M7 1v3h3" fill="none" stroke="#555" stroke-width="1"/></svg><div class="t" style="letter-spacing:-0.273px;">Położenie geograficzne (No</div></div>
<div class="row" style="top:335.500px"><svg class="a" style="left:1.900px;top:2.500px;width:4.600px;height:4.600px" viewBox="0 0 9 9"><rect x=".5" y=".5" width="8" height="8" fill="#fff" stroke="#9aa3b5" stroke-width="1"/><path d="M2.500 4.500h4M4.500 2.500v4" stroke="#3a4c80" stroke-width="1"/></svg><svg class="pg" viewBox="0 0 11 15"><path d="M2 1h5l3 3v9a1 1 0 0 1-1 1H2a1 1 0 0 1-1-1V2a1 1 0 0 1 1-1z" fill="#fff" stroke="#555" stroke-width="1.200"/><path d="M7 1v3h3" fill="none" stroke="#555" stroke-width="1"/></svg><div class="t" style="letter-spacing:-0.349px;">Rzeki w Brazylii</div></div>
<div class="row" style="top:345px"><svg class="pg" viewBox="0 0 11 15"><path d="M2 1h5l3 3v9a1 1 0 0 1-1 1H2a1 1 0 0 1-1-1V2a1 1 0 0 1 1-1z" fill="#fff" stroke="#555" stroke-width="1.200"/><path d="M7 1v3h3" fill="none" stroke="#555" stroke-width="1"/></svg><div class="t" style="letter-spacing:-0.257px;">Rzeki w Brazylii (Notatki)</div></div>
<div class="row" style="top:354.500px"><svg class="a" style="left:1.900px;top:2.500px;width:4.600px;height:4.600px" viewBox="0 0 9 9"><rect x=".5" y=".5" width="8" height="8" fill="#fff" stroke="#9aa3b5" stroke-width="1"/><path d="M2.500 4.500h4M4.500 2.500v4" stroke="#3a4c80" stroke-width="1"/></svg><svg class="pg" viewBox="0 0 11 15"><path d="M2 1h5l3 3v9a1 1 0 0 1-1 1H2a1 1 0 0 1-1-1V2a1 1 0 0 1 1-1z" fill="#fff" stroke="#555" stroke-width="1.200"/><path d="M7 1v3h3" fill="none" stroke="#555" stroke-width="1"/></svg><div class="t" style="letter-spacing:-0.384px;color:#fff">Slajd 7</div></div>
<div class="row" style="top:364px"><svg class="pg" viewBox="0 0 11 15"><path d="M2 1h5l3 3v9a1 1 0 0 1-1 1H2a1 1 0 0 1-1-1V2a1 1 0 0 1 1-1z" fill="#fff" stroke="#555" stroke-width="1.200"/><path d="M7 1v3h3" fill="none" stroke="#555" stroke-width="1"/></svg><div class="t" style="letter-spacing:-0.253px;">Slajd 7 (Notatki)</div></div>
<div class="row" style="top:373.500px"><svg class="a" style="left:1.900px;top:2.500px;width:4.600px;height:4.600px" viewBox="0 0 9 9"><rect x=".5" y=".5" width="8" height="8" fill="#fff" stroke="#9aa3b5" stroke-width="1"/><path d="M2.500 4.500h4M4.500 2.500v4" stroke="#3a4c80" stroke-width="1"/></svg><svg class="pg" viewBox="0 0 11 15"><path d="M2 1h5l3 3v9a1 1 0 0 1-1 1H2a1 1 0 0 1-1-1V2a1 1 0 0 1 1-1z" fill="#fff" stroke="#555" stroke-width="1.200"/><path d="M7 1v3h3" fill="none" stroke="#555" stroke-width="1"/></svg><div class="t" style="letter-spacing:-0.241px;">Tytuł i zawartość</div></div>
<div class="row" style="top:383px"><svg class="pg" viewBox="0 0 11 15"><path d="M2 1h5l3 3v9a1 1 0 0 1-1 1H2a1 1 0 0 1-1-1V2a1 1 0 0 1 1-1z" fill="#fff" stroke="#555" stroke-width="1.200"/><path d="M7 1v3h3" fill="none" stroke="#555" stroke-width="1"/></svg><div class="t" style="letter-spacing:-0.193px;">Tytuł i zawartość (Notatki)</div></div>
<!-- h scrollbar in list -->
<div class="a" style="left:728.800px;top:419.200px;width:91.800px;height:7.600px;background:#f0f0f0"></div>
<div class="a" style="left:737px;top:419.200px;width:52px;height:7.600px;background:#cdcdcd"></div>
<svg class="a" style="left:730.800px;top:420.600px;width:3.500px;height:4.600px" viewBox="0 0 7 9"><path d="M5.500 1L1.500 4.500l4 3.500" fill="none" stroke="#333" stroke-width="1.600"/></svg>
<svg class="a" style="left:814.500px;top:420.600px;width:3.500px;height:4.600px" viewBox="0 0 7 9"><path d="M1.500 1l4 3.500-4 3.500" fill="none" stroke="#333" stroke-width="1.600"/></svg>
<div class="btn" style="left:731.200px;top:436.400px;width:41.500px"><span style="letter-spacing:-0.152px;">Za<u>m</u>knij</span></div>
<div class="btn" style="left:776.600px;top:436.400px;width:41.500px;border:1px solid #3c7fc4;box-shadow:inset 0 0 0 .5px #3c7fc4"><span style="letter-spacing:-0.229px;">Z<u>a</u>stosuj</span></div>

<!-- tooltip -->
<div class="a" style="left:695.400px;top:295.400px;width:52px;height:10.900px;background:#ffffe1;border:0.600px solid #767676;border-radius:1.500px;box-shadow:.5px .8px 1.500px rgba(0,0,0,.3)"></div>
<div class="t" style="letter-spacing:-0.367px;left:697.900px;top:297px;font-size:6.600px">Cel w dokumencie</div>
<!-- cursor -->
<svg class="a" style="left:698px;top:282.700px;width:7px;height:10.500px" viewBox="0 0 14 21"><path d="M1 1v15l3.800-3.500 2.600 6 2.400-1-2.600-5.800h5z" fill="#fff" stroke="#111" stroke-width="1.100"/></svg>

<!-- RIGHT: scrollbar + sidebar -->
<div class="a" style="left:926.900px;top:43px;width:9.800px;height:476.500px;background:#f0f0f0"></div>
<div class="a" style="left:928px;top:152px;width:8.600px;height:254.600px;background:#cdcdcd"></div>
<svg class="a" style="left:929.500px;top:45.500px;width:5px;height:4px" viewBox="0 0 10 8"><path d="M1 6.500l4-4.500 4 4.500" fill="none" stroke="#333" stroke-width="1.800"/></svg>
<svg class="a" style="left:929.500px;top:513.500px;width:5px;height:4px" viewBox="0 0 10 8"><path d="M1 1.500l4 4.500 4-4.500" fill="none" stroke="#333" stroke-width="1.800"/></svg>
<div class="a" style="left:936.500px;top:43px;width:23.500px;height:486px;background:#f0f0f0;border-left:0.8px solid #c9c9c9"></div>
<div class="a" style="left:936.200px;top:267.500px;width:3.400px;height:36px;background:#6b6b6b"></div>
<div class="a" style="left:937.200px;top:284px;width:0;height:0;border-top:1.500px solid transparent;border-bottom:1.500px solid transparent;border-left:2px solid #eee"></div>
<!-- bottom horizontal scrollbar -->
<div class="a" style="left:137.500px;top:519.500px;width:799px;height:9.500px;background:#f0f0f0"></div>
<div class="a" style="left:399px;top:519.700px;width:265.200px;height:9.300px;background:#cdcdcd"></div>
<svg class="a" style="left:140px;top:522px;width:4px;height:5px" viewBox="0 0 8 10"><path d="M6.500 1L2 5l4.500 4" fill="none" stroke="#333" stroke-width="1.800"/></svg>
<svg class="a" style="left:921.500px;top:522px;width:4px;height:5px" viewBox="0 0 8 10"><path d="M1.500 1L6 5 1.500 9" fill="none" stroke="#333" stroke-width="1.800"/></svg>
<!-- sidebar icons -->
<div class="a" style="left:941.200px;top:74px;width:17.800px;height:17px;background:#c5e1f9"></div>
<svg class="a" style="left:947px;top:47px;width:6px;height:5px" viewBox="0 0 12 10"><path d="M1 1.500h10M1 5h10M1 8.500h10" stroke="#999" stroke-width="1.800"/></svg>
<svg class="a" style="left:944px;top:59px;width:12px;height:12px" viewBox="0 0 24 24"><rect x="3" y="3" width="18" height="18" rx="1.500" fill="#fff" stroke="#555" stroke-width="1.800"/><rect x="3" y="3" width="18" height="4" fill="#555"/><path d="M7 11.500h10M7 16h10" stroke="#888" stroke-width="1.400"/><path d="M11 10v3M13 14.500v3" stroke="#3f92dc" stroke-width="2.400"/></svg>
<svg class="a" style="left:944px;top:76.300px;width:12px;height:12px" viewBox="0 0 24 24"><path d="M3 20L10 3l7 17M6 14h8" fill="none" stroke="#333" stroke-width="2.300"/><path d="M13 21c2-5 6-9 10-12-1 5-4 9-8 12z" fill="#4f9bd8" stroke="#2f6fa8" stroke-width=".8"/></svg>
<svg class="a" style="left:944px;top:94px;width:12px;height:12px" viewBox="0 0 24 24"><path d="M2 18V4h7l2 3h10v4" fill="#fbe9b9" stroke="#eda63c" stroke-width="1.800"/><rect x="9" y="10" width="13" height="11" fill="#fff" stroke="#444" stroke-width="1.800"/><path d="M10 20l4-5 3 3 2-2 3 3z" fill="#4f9bd8"/></svg>
<svg class="a" style="left:944px;top:111.700px;width:12px;height:12px" viewBox="0 0 24 24"><circle cx="12" cy="12" r="9" fill="#fff" stroke="#555" stroke-width="1.800"/><path d="M16.500 7.500l-3 6-6 3 3-6z" fill="#4f9bd8"/></svg>
<svg class="a" style="left:944px;top:129px;width:12px;height:12px" viewBox="0 0 24 24"><path d="M12 3l9 9-9 9-9-9z" fill="#fff" stroke="#555" stroke-width="1.800"/></svg>
<svg class="a" style="left:944px;top:146.300px;width:12px;height:12px" viewBox="0 0 24 24"><rect x="8" y="5" width="15" height="15" rx="1" fill="#fff" stroke="#8a8a8a" stroke-width="1.500"/><path d="M11 10h12" stroke="#3f86c8" stroke-width="2"/><path d="M3 7l-1.500 5 1.500 5M5.500 9v6" stroke="#f0b15a" stroke-width="1.300" fill="none"/></svg>
<svg class="a" style="left:944px;top:163.300px;width:12px;height:12px" viewBox="0 0 24 24"><path d="M10 3l2.600 5.600 6 .7-4.500 4.100 1.300 6L10 16.500 4.600 19.400l1.300-6L1.400 9.300l6-.7z" fill="#fbe3b0" stroke="#eba53a" stroke-width="1.500"/><path d="M18 7h4M19 10.500h4M19 14h3" stroke="#f0b15a" stroke-width="1.300"/></svg>
<svg class="a" style="left:944px;top:180.700px;width:12px;height:12px" viewBox="0 0 24 24"><rect x="2" y="3" width="20" height="18" rx="1" fill="#4a9bd6" stroke="#3b6f98" stroke-width="1.800"/><path d="M5 7h14" stroke="#9fd0ee" stroke-width="2"/><path d="M5 14h14" stroke="#1f6fb3" stroke-width="4"/></svg>

<!-- STATUS BAR -->
<div class="a" style="left:0;top:529px;width:960px;height:11px;background:#f0f0f0;border-top:0.7px solid #d5d5d5"></div>
<div class="a" style="left:0;top:539.200px;width:960px;height:1px;background:#2b2b2b"></div>
<div class="t" style="letter-spacing:-0.355px;left:5.800px;top:531.300px;font-size:6.200px">Slajd 2 z 7</div>
<div class="t" style="letter-spacing:-0.194px;left:38px;top:531.300px;font-size:6.200px">Zaznaczono Tekst konspektu 'Symbol zastępczy zawartości 6'</div>
<div class="t" style="letter-spacing:-0.102px;left:390px;top:531.300px;font-size:6.200px">Tytuł i zawartość</div>
<div class="t" style="letter-spacing:-0.266px;left:589px;top:531.300px;font-size:6.200px">10,83 / 3,40</div>
<div class="t" style="letter-spacing:-0.339px;left:634px;top:531.300px;font-size:6.200px">12,20 x 2,00</div>
<div class="t" style="letter-spacing:-0.253px;left:766.500px;top:531.300px;font-size:6.200px">Polski</div>
<div class="t" style="letter-spacing:-0.532px;left:941.300px;top:531.300px;font-size:6.200px">120%</div>
<div class="a" style="left:34.200px;top:530.500px;width:.7px;height:8.500px;background:#cfcfcf"></div>
<div class="a" style="left:385px;top:530.500px;width:.7px;height:8.500px;background:#cfcfcf"></div>
<div class="a" style="left:573.300px;top:530.500px;width:.7px;height:8.500px;background:#cfcfcf"></div>
<div class="a" style="left:667.500px;top:530.500px;width:.7px;height:8.500px;background:#cfcfcf"></div>
<div class="a" style="left:680px;top:530.500px;width:.7px;height:8.500px;background:#cfcfcf"></div>
<div class="a" style="left:694px;top:530.500px;width:.7px;height:8.500px;background:#cfcfcf"></div>
<div class="a" style="left:853.500px;top:530.500px;width:.7px;height:8.500px;background:#cfcfcf"></div>
<div class="a" style="left:936.600px;top:530.500px;width:.7px;height:8.500px;background:#cfcfcf"></div>
<svg class="a" style="left:579px;top:531.500px;width:7px;height:6px" viewBox="0 0 14 12"><path d="M1 1v4M1 3h12M13 1v4" stroke="#3f72a8" stroke-width="1.200" fill="none"/><rect x="3" y="6" width="8" height="5" fill="#fff" stroke="#888" stroke-width="1"/></svg>
<svg class="a" style="left:624px;top:531.500px;width:7px;height:6px" viewBox="0 0 14 12"><path d="M1 2h12M1 1v2M13 1v2" stroke="#3f72a8" stroke-width="1.200" fill="none"/><rect x="3" y="5" width="9" height="6" fill="#dbe9f5" stroke="#3f72a8" stroke-width="1"/></svg>
<svg class="a" style="left:670.500px;top:531.500px;width:6px;height:6px" viewBox="0 0 12 12"><rect x="1" y="1" width="10" height="10" fill="#d23b3b"/><path d="M3.500 3.500h2v5h-2zM6.800 3.500h2v5h-2z" fill="#f7d5d5"/></svg>
<svg class="a" style="left:855px;top:531px;width:7px;height:7px" viewBox="0 0 14 14"><path d="M7 1.500v11M1.500 7h11" stroke="#4f9bd8" stroke-width="1.200"/><path d="M7 0l2.400 3H4.600zM7 14l2.400-3H4.600zM0 7l3-2.400v4.800zM14 7l-3-2.400v4.800z" fill="#4f9bd8"/></svg>
<div class="a" style="left:869.500px;top:534.300px;width:4px;height:.9px;background:#444"></div>
<div class="a" style="left:877.500px;top:534.400px;width:47.500px;height:.7px;background:#8a8a8a"></div>
<svg class="a" style="left:899.800px;top:531px;width:3.600px;height:7.400px" viewBox="0 0 7.200 14.800"><rect x="1.600" y="1.200" width="4" height="12.400" rx="1.600" fill="#f4f4f4" stroke="#666" stroke-width="1.100"/></svg>
<div class="a" style="left:929.300px;top:534.200px;width:4.600px;height:1px;background:#333"></div>
<div class="a" style="left:931.100px;top:532.400px;width:1px;height:4.600px;background:#333"></div>


</body></html>
